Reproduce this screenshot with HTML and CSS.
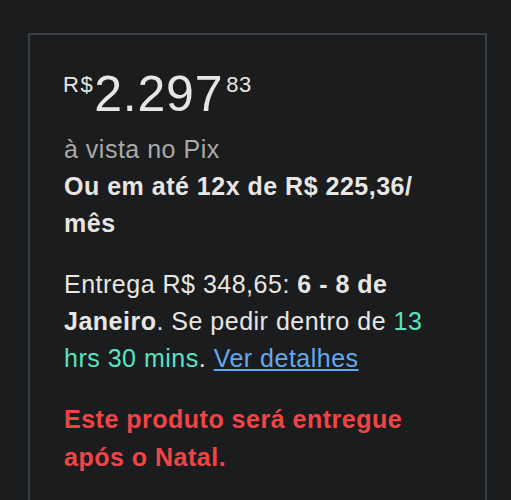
FILE: index.html
```html
<!DOCTYPE html>
<html lang="pt-BR">
<head>
<meta charset="utf-8">
<link rel="stylesheet" href="styles.css">
</head>
<body>
<div class="box">
  <div class="price"><span class="cur">R$</span><span class="whole">2.297</span><span class="cents">83</span></div>
  <div class="pix">à vista no Pix</div>
  <div class="install">Ou em até 12x de R$ 225,36/<wbr>mês</div>
  <p class="delivery">Entrega R$ 348,65: <b>6 - 8 de Janeiro</b>. Se pedir dentro de <span class="timer">13 hrs 30 mins</span>. <a href="#" class="link">Ver detalhes</a></p>
  <p class="warn">Este produto será entregue após o Natal.</p>
</div>
</body>
</html>
```
FILE: styles.css
```css
html, body {
  margin: 0;
  background: #1b1c1e;
}
body {
  padding: 33px 0 0 28px;
  font-family: "Liberation Sans", Arial, sans-serif;
  color: #e8e6e3;
}
.box {
  width: 387px;
  height: 431px;
  border: 2px solid #3b3f41;
  border-bottom: none;
  padding: 34px 34px 0 34px;
  overflow: hidden;
}
.price {
  display: flex;
  align-items: flex-start;
  line-height: 48px;
  height: 48px;
  margin-top: 1px;
}
.cur, .cents {
  font-size: 22px;
  line-height: 22px;
  margin-top: 4px;
}
.cur {
  letter-spacing: 1.5px;
  margin-left: -1px;
}
.cents {
  margin-left: 3px;
  letter-spacing: 0.5px;
}
.whole {
  font-size: 50px;
  letter-spacing: 0.8px;
}
.pix {
  margin-top: 13px;
  font-size: 25px;
  letter-spacing: 0.5px;
  line-height: 37px;
  color: #a9a9a9;
}
.install {
  font-size: 25px;
  letter-spacing: 0.5px;
  line-height: 37px;
  font-weight: bold;
}
.delivery {
  margin: 24px 0 0;
  font-size: 25px;
  letter-spacing: 0.5px;
  line-height: 37px;
}
.timer {
  color: #56e4c2;
}
.link {
  color: #64a8ef;
  text-decoration: underline;
}
.warn {
  margin: 23px 0 0;
  font-size: 25px;
  letter-spacing: 0.5px;
  line-height: 38px;
  font-weight: bold;
  color: #f24444;
}
```
